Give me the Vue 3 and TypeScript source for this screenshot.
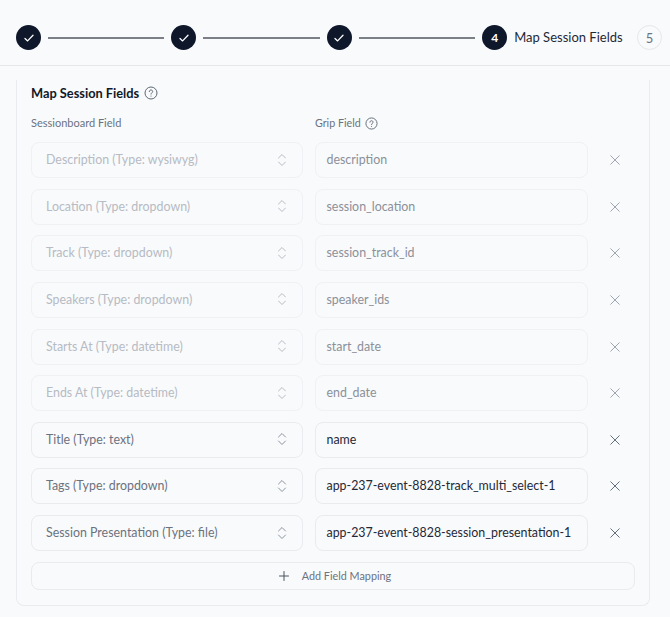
<script setup lang="ts">
const rows = [
  { label: 'Description (Type: wysiwyg)', value: 'description', locked: true },
  { label: 'Location (Type: dropdown)', value: 'session_location', locked: true },
  { label: 'Track (Type: dropdown)', value: 'session_track_id', locked: true },
  { label: 'Speakers (Type: dropdown)', value: 'speaker_ids', locked: true },
  { label: 'Starts At (Type: datetime)', value: 'start_date', locked: true },
  { label: 'Ends At (Type: datetime)', value: 'end_date', locked: true },
  { label: 'Title (Type: text)', value: 'name', locked: false },
  { label: 'Tags (Type: dropdown)', value: 'app-237-event-8828-track_multi_select-1', locked: false },
  { label: 'Session Presentation (Type: file)', value: 'app-237-event-8828-session_presentation-1', locked: false },
]
const doneSteps = [1, 2, 3]
</script>

<template>
  <div class="page">
    <header class="stepper">
      <template v-for="s in doneSteps" :key="s">
        <span class="dot">
          <svg width="14" height="14" viewBox="0 0 14 14" fill="none"><path d="M3 7.5l2.6 2.4L11 4.3" stroke="#fff" stroke-width="1.3" stroke-linecap="round" stroke-linejoin="round"/></svg>
        </span>
        <span class="line"></span>
      </template>
      <span class="dot current">4</span>
      <span class="step-name">Map Session Fields</span>
      <span class="dot todo">5</span>
    </header>
    <section class="card">
      <h2 class="title">Map Session Fields
        <svg class="help" width="14" height="14" viewBox="0 0 14 14" fill="none"><circle cx="7" cy="7" r="6" stroke="#5f6875" stroke-width="1"/><path d="M5.3 5.6c0-1 .8-1.6 1.7-1.6s1.7.6 1.7 1.5c0 1.3-1.7 1.3-1.7 2.6" stroke="#5f6875" stroke-width="1" stroke-linecap="round"/><circle cx="7" cy="10" r=".6" fill="#5f6875"/></svg>
      </h2>
      <div class="heads">
        <span>Sessionboard Field</span>
        <span class="grip">Grip Field
          <svg class="help" width="13" height="13" viewBox="0 0 14 14" fill="none"><circle cx="7" cy="7" r="6" stroke="#5f6875" stroke-width="1"/><path d="M5.3 5.6c0-1 .8-1.6 1.7-1.6s1.7.6 1.7 1.5c0 1.3-1.7 1.3-1.7 2.6" stroke="#5f6875" stroke-width="1" stroke-linecap="round"/><circle cx="7" cy="10" r=".6" fill="#5f6875"/></svg>
        </span>
      </div>
      <div class="rows">
        <div v-for="r in rows" :key="r.value" class="row" :class="{ locked: r.locked }">
          <div class="box select">
            <span>{{ r.label }}</span>
            <svg width="10" height="14" viewBox="0 0 10 14" fill="none"><path d="M1.5 5L5 1.5 8.5 5M1.5 9L5 12.5 8.5 9" stroke="#8b93a0" stroke-width="1" stroke-linecap="round" stroke-linejoin="round"/></svg>
          </div>
          <div class="box input">{{ r.value }}</div>
          <svg class="remove" width="12" height="12" viewBox="0 0 12 12" fill="none"><path d="M1.75 1.75l8.5 8.5M10.25 1.75l-8.5 8.5" stroke="#66707e" stroke-width="1" stroke-linecap="round"/></svg>
        </div>
      </div>
      <button class="add" type="button">
        <svg width="12" height="12" viewBox="0 0 12 12" fill="none"><path d="M6 1.5v9M1.5 6h9" stroke="#4b5563" stroke-width="1" stroke-linecap="round"/></svg>
        <span>Add Field Mapping</span>
      </button>
    </section>
  </div>
</template>

<style>
html, body { margin: 0; background: #f9fafb; }
</style>

<style scoped>
.page {
  width: 670px;
  height: 617px;
  overflow: hidden;
  background: #f9fafb;
  font-family: Lato, "Liberation Sans", sans-serif;
  color: #111827;
}
.stepper {
  box-sizing: border-box;
  height: 66px;
  padding: 25px 8px 0 16px;
  display: flex;
  align-items: flex-start;
  border-bottom: 1px solid #e5e7eb;
}
.dot {
  flex: none;
  box-sizing: border-box;
  width: 25px;
  height: 25px;
  border-radius: 50%;
  background: #0f172a;
  color: #fff;
  display: flex;
  align-items: center;
  justify-content: center;
  font-size: 12px;
  font-weight: 700;
}
.line {
  flex: none;
  width: 116.4px;
  height: 2px;
  margin: 12px 7px 0;
  background: #7b7f86;
}
.step-name {
  margin-left: 7px;
  margin-right: 14.5px;
  padding-bottom: 1px;
  line-height: 24px;
  font-size: 13px;
  color: #1f2937;
  white-space: nowrap;
}
.dot.todo {
  background: #f9fafb;
  border: 1px solid #e5e7eb;
  color: #6b7280;
  font-weight: 400;
  font-size: 13px;
}
.card {
  box-sizing: border-box;
  margin: 14px 20px 0 16px;
  height: 526px;
  padding: 4px 14px 0;
  border: 1px solid #e9ebef;
  border-top: none;
  border-radius: 0 0 8px 8px;
}
.title {
  margin: 0;
  height: 18px;
  display: flex;
  align-items: center;
  gap: 5px;
  font-size: 12.8px;
  line-height: 18px;
  font-weight: 700;
  color: #111827;
}
.heads {
  display: flex;
  margin-top: 13px;
  font-size: 11px;
  line-height: 16px;
  color: #6b7280;
}
.heads > span:first-child { width: 284px; }
.grip { display: flex; align-items: center; gap: 4px; font-size: 10.7px; }
.rows {
  margin-top: 11px;
  display: grid;
  grid-auto-rows: 36px;
  row-gap: 10.65px;
}
.row {
  display: flex;
  align-items: center;
  gap: 12px;
}
.box {
  box-sizing: border-box;
  height: 36px;
  display: flex;
  align-items: center;
  padding-bottom: 1px;
  border: 1px solid #e9ebef;
  border-radius: 8px;
  font-size: 12.4px;
  white-space: nowrap;
}
.select {
  flex: none;
  width: 272px;
  padding-left: 14px;
  padding-right: 15px;
  justify-content: space-between;
  color: #6b7280;
}
.input {
  flex: none;
  width: 273px;
  padding-left: 10.5px;
  padding-right: 10px;
  color: #1f2937;
}
.remove { margin-left: 9px; }
.locked .box { border-color: #f0f1f4; }
.locked .select { color: #b6bbc4; }
.locked .select svg { opacity: .6; }
.locked .input { color: #8b909a; }
.locked .remove { opacity: .6; }
.add {
  box-sizing: border-box;
  width: 604px;
  height: 28px;
  margin-top: 11px;
  padding: 0 0 1px 3px;
  display: flex;
  align-items: center;
  justify-content: center;
  gap: 12px;
  background: transparent;
  border: 1px solid #e9ebef;
  border-radius: 8px;
  font-family: inherit;
  font-size: 10.8px;
  color: #6b7280;
}
</style>
